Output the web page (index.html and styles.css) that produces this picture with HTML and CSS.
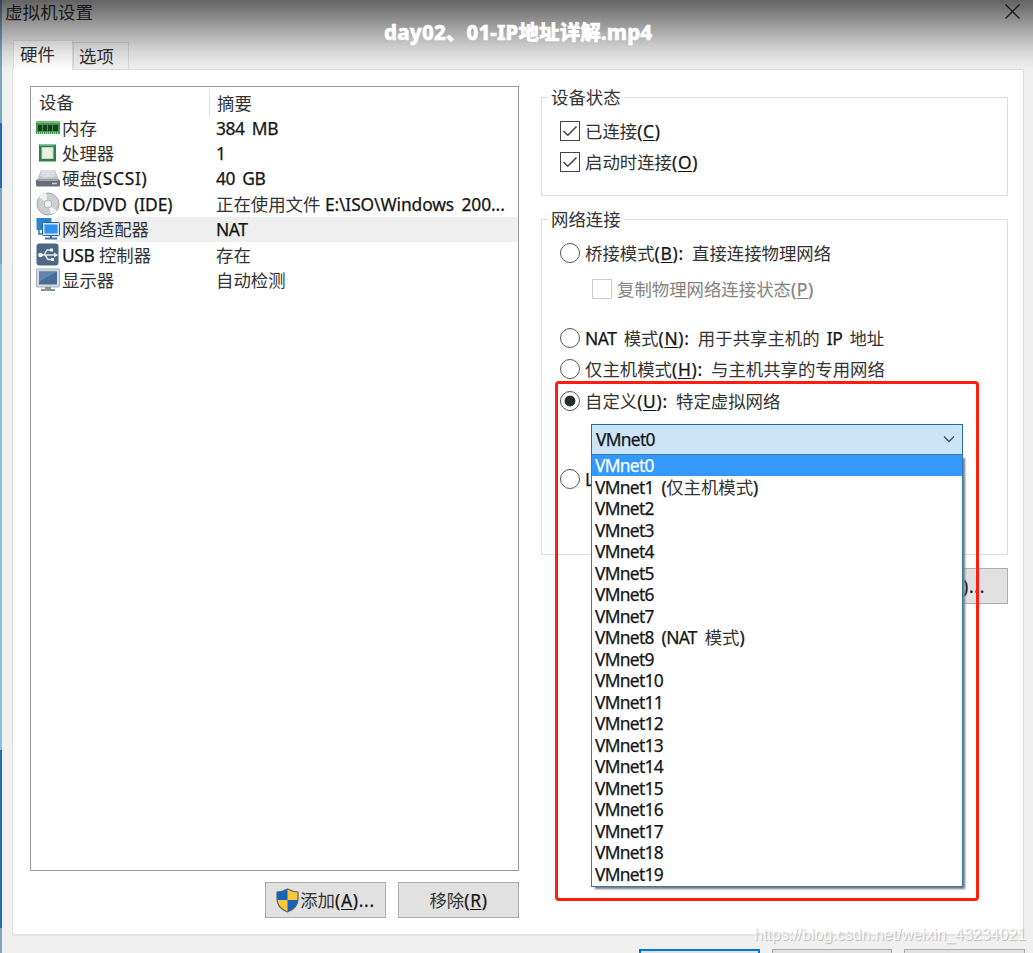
FILE: index.html
```html
<!DOCTYPE html>
<html lang="zh-CN">
<head>
<meta charset="utf-8">
<title>虚拟机设置</title>
<link rel="stylesheet" href="styles.css">
</head>
<body>
<div class="window">
  <header class="titlebar"><span>虚拟机设置</span>
    <svg class="close" width="17" height="17" viewBox="0 0 17 17"><path d="M1.5 1.5l14 14M15.5 1.5l-14 14" stroke="#333" stroke-width="1.4" fill="none"/></svg>
  </header>
  <nav class="tabs"><div class="tab active">硬件</div><div class="tab">选项</div></nav>
  <main class="panel">
    <section class="left">
      <div class="devices">
        <div class="row head"><span class="name">设备</span><span class="sum">摘要</span></div>
        <div class="row"><svg class="ico" viewBox="0 0 24 24"><path d="M0 5h24v13H0z" fill="#3c9a4a"/><path d="M0 5h24v2H0z" fill="#79bd7a"/><path d="M2 9h4v6H2zM7 9h4v6H7zM12 9h4v6h-4zM17 9h5v6h-5z" fill="#24382a"/><path d="M1 17h22" stroke="#d6c74c" stroke-width="2" stroke-dasharray="1 1"/></svg><span class="name">内存</span><span class="sum"><i>384 MB</i></span></div>
        <div class="row"><svg class="ico" viewBox="0 0 24 24"><rect x="3" y="3.500" width="17" height="17" fill="#278345"/><path d="M4 4.500h15" stroke="#62ae73" stroke-width="1"/><rect x="6" y="6.500" width="11" height="11" fill="#e8f0e8" stroke="#c1d5c1"/></svg><span class="name">处理器</span><span class="sum"><i>1</i></span></div>
        <div class="row"><svg class="ico" viewBox="0 0 24 24"><path d="M5 4h14l4 10H1z" fill="#c2c5ca"/><path d="M6 4h12l2 6q-9 3-16 0z" fill="#dcdee2"/><rect x="0" y="13.500" width="24" height="7" rx="1.500" fill="#686d77"/><path d="M2 14.500h20" stroke="#a6aab2"/><path d="M16 17.500h5" stroke="#c5d3da" stroke-width="1.500"/></svg><span class="name">硬盘<i class="key">(SCSI)</i></span><span class="sum"><i>40 GB</i></span></div>
        <div class="row"><svg class="ico" viewBox="0 0 24 24"><circle cx="12" cy="12" r="11" fill="#cdd0d3" stroke="#a3a7aa"/><path d="M12 12L3 5a11 11 0 0 1 7-4zM12 12l9 7a11 11 0 0 1-6 3z" fill="#f3f4f5"/><circle cx="12" cy="12" r="4" fill="#e9ebed" stroke="#adb1b5"/><circle cx="12" cy="12" r="1.500" fill="#fff"/></svg><span class="name"><i class="cd">CD/DVD (IDE)</i></span><span class="sum">正在使用文件 <i class="path">E:\ISO\Windows 200...</i></span></div>
        <div class="row selected"><svg class="ico" viewBox="0 0 24 24"><rect x="0.500" y="1" width="15" height="12" fill="#2b83ce"/><path d="M3 13v4h4" stroke="#3b6f9f" stroke-width="1.500" fill="none"/><rect x="6.500" y="5.500" width="17" height="13" rx="1" fill="#d0e5f5" stroke="#2765a0"/><rect x="8.500" y="7.500" width="13" height="9" fill="#2d93ee"/><path d="M15 18v3M9 21.500h12" stroke="#4779a2" stroke-width="2"/></svg><span class="name">网络适配器</span><span class="sum"><i>NAT</i></span></div>
        <div class="row"><svg class="ico" viewBox="0 0 24 24"><rect x="0.500" y="0.500" width="22" height="22" rx="3" fill="#4d6985"/><path d="M3 12h16M8 12l3-5h4M9 12l3 4.500h4" stroke="#dfeaf2" stroke-width="1.400" fill="none"/><circle cx="4.500" cy="12" r="2.300" fill="#edf4f8"/><path d="M18 9.500l4 2.500-4 2.500zM14 5.500h3v3h-3zM15 15h3v3h-3z" fill="#edf4f8"/></svg><span class="name"><i>USB</i> 控制器</span><span class="sum">存在</span></div>
        <div class="row"><svg class="ico" viewBox="0 0 24 24"><rect x="0.500" y="1" width="23" height="18" rx="1" fill="#d5dce2" stroke="#a5afb8"/><path d="M3 3.500h18v13H3z" fill="#486c98"/><path d="M3 3.500h18L3 14z" fill="#6384ab"/><path d="M9 19h6v2h4v2H5v-2h4z" fill="#8496a8"/></svg><span class="name">显示器</span><span class="sum">自动检测</span></div>
      </div>
      <div class="actions">
        <div class="button"><svg width="23" height="25" viewBox="0 0 23 25"><path d="M11.500 1Q17 4 22 4v7q0 9-10.500 13Q1 20 1 11V4q5 0 10.500-3z" fill="#1464bd"/><path d="M11.500 1Q17 4 22 4v8H11.500zM1 12h10.500v12Q2.500 20 1 12z" fill="#fdc735"/><path d="M11.500 1Q17 4 22 4v7q0 9-10.500 13Q1 20 1 11V4q5 0 10.500-3z" fill="none" stroke="#5d6268" stroke-width="1.200"/></svg><span>添加<i class="key">(<u>A</u>)...</i></span></div>
        <div class="button"><span>移除<i class="key">(<u>R</u>)</i></span></div>
      </div>
    </section>
    <section class="right">
      <div class="group status">
        <div class="legend">设备状态</div>
        <div class="opt"><svg width="20" height="20" viewBox="0 0 20 20"><rect x=".5" y=".5" width="19" height="19" fill="#fff" stroke="#444"/><path d="M3.500 10l4.300 4.200L16.500 5.500" fill="none" stroke="#444" stroke-width="1.600"/></svg><span>已连接<i class="key">(<u>C</u>)</i></span></div>
        <div class="opt"><svg width="20" height="20" viewBox="0 0 20 20"><rect x=".5" y=".5" width="19" height="19" fill="#fff" stroke="#444"/><path d="M3.500 10l4.300 4.200L16.500 5.500" fill="none" stroke="#444" stroke-width="1.600"/></svg><span>启动时连接<i class="key">(<u>O</u>)</i></span></div>
      </div>
      <div class="group network">
        <div class="legend">网络连接</div>
        <div class="opt"><b class="radio"></b><span>桥接模式<i class="key">(<u>B</u>): </i>直接连接物理网络</span></div>
        <div class="opt sub"><b class="check"></b><span>复制物理网络连接状态<i class="key">(<u>P</u>)</i></span></div>
        <div class="opt nat"><b class="radio"></b><span><i>NAT </i>模式<i class="key">(<u>N</u>): </i>用于共享主机的<i> IP </i>地址</span></div>
        <div class="opt"><b class="radio"></b><span>仅主机模式<i class="key">(<u>H</u>): </i>与主机共享的专用网络</span></div>
        <div class="opt"><b class="radio on"></b><span>自定义<i class="key">(<u>U</u>): </i>特定虚拟网络</span></div>
        <div class="combo"><i class="vm">VMnet0</i><svg width="12" height="8" viewBox="0 0 12 8"><path d="M1 1.500l5 5 5-5" fill="none" stroke="#444f58" stroke-width="1.400"/></svg>
          <div class="menu">
            <div class="item hot"><span><i>VMnet0</i></span></div>
            <div class="item"><span><i>VMnet1 (</i>仅主机模式<i>)</i></span></div>
            <div class="item"><span><i>VMnet2</i></span></div>
            <div class="item"><span><i>VMnet3</i></span></div>
            <div class="item"><span><i>VMnet4</i></span></div>
            <div class="item"><span><i>VMnet5</i></span></div>
            <div class="item"><span><i>VMnet6</i></span></div>
            <div class="item"><span><i>VMnet7</i></span></div>
            <div class="item"><span><i>VMnet8 (NAT </i>模式<i>)</i></span></div>
            <div class="item"><span><i>VMnet9</i></span></div>
            <div class="item"><span><i>VMnet10</i></span></div>
            <div class="item"><span><i>VMnet11</i></span></div>
            <div class="item"><span><i>VMnet12</i></span></div>
            <div class="item"><span><i>VMnet13</i></span></div>
            <div class="item"><span><i>VMnet14</i></span></div>
            <div class="item"><span><i>VMnet15</i></span></div>
            <div class="item"><span><i>VMnet16</i></span></div>
            <div class="item"><span><i>VMnet17</i></span></div>
            <div class="item"><span><i>VMnet18</i></span></div>
            <div class="item"><span><i>VMnet19</i></span></div>
          </div>
        </div>
        <div class="opt lan"><b class="radio"></b><span><i>L</i></span></div>
      </div>
      <div class="button advanced"><i class="key">)...</i></div>
    </section>
  </main>
  <footer class="footer"><div class="button primary"></div><div class="button"></div><div class="button"></div></footer>
</div>
<div class="desktop-edge"></div>
<div class="shade"></div>
<div class="video-title">day02、01-IP地址详解.mp4</div>
<div class="highlight"></div>
<div class="watermark">https://blog.csdn.net/weixin_43234021</div>
</body>
</html>
```
FILE: styles.css
```css
* { box-sizing: border-box; }
body { margin: 0; width: 1033px; height: 953px; overflow: hidden; position: relative; background: #f0f0f0;
  font-family: "Noto Sans", "Noto Sans CJK SC", sans-serif; font-size: 17.4px; line-height: 24px; color: #333; }
span { white-space: pre; }
i { font-style: normal; letter-spacing: -0.4px; word-spacing: 3px; color: #151515; -webkit-text-stroke: 0.25px currentColor; }
.key { letter-spacing: 0.7px; }
u { text-underline-offset: 2px; text-decoration-thickness: 1px; }
svg { flex: none; display: block; }
.window, .titlebar, .tabs, .panel, .left, .right, .devices, .row, .opt, .button, .actions, .combo, .footer, .item, .group { display: flex; }
.window { height: 953px; flex-direction: column; overflow: hidden; }
.titlebar { height: 40px; padding: 0 12px 0 5px; justify-content: space-between; font-size: 17.6px; flex: none; }
.titlebar .close { margin-top: 3px; }
.tabs { height: 29px; padding-left: 13px; align-items: flex-end; flex: none; }
.tab { width: 56px; height: 27px; border: 1px solid #d9d9d9; border-bottom: 0; padding-left: 5px; line-height: 26px; }
.tab.active { width: 60px; height: 30px; margin-bottom: -1px; background: #fff; border-color: #e3e3e3; padding-left: 6px; line-height: 27px; position: relative; z-index: 1; }
.panel { margin-left: 12px; width: 1012px; height: 867px; flex: none; background: #fff; border: 1px solid #dcdcdc; border-bottom: 2px solid #e3e3e3; padding: 16px 15px 0 17px; gap: 22px; }
.left { width: 489px; flex-direction: column; }
.devices { height: 785px; border: 1px solid #999; flex-direction: column; }
.row { height: 25.4px; align-items: center; padding-left: 5px; flex: none; }
.row.head { height: 28px; padding-left: 8px; padding-top: 3px; }
.row .name { width: 154px; }
.row.head .name { width: 171px; height: 28px; line-height: 27px; border-right: 1px solid #e2e2e2; margin-right: -1px; }
.row .sum { padding-left: 0; }
.row.head .sum { padding-left: 8px; }
.ico { width: 24px; height: 24px; margin-right: 2px; }
.selected { background: linear-gradient(90deg, #fff 24px, #efefef 24px); }
.cd { letter-spacing: -0.15px; }
.path { letter-spacing: -0.1px; }
.actions { margin: 11px 0 0 235px; gap: 12px; }
.button { width: 122px; height: 36px; border: 1px solid #adadad; background: #e1e1e1; align-items: center; justify-content: center; flex: none; }
.actions .button { width: 121px; }
.button svg { margin-right: 1px; }
.right { width: 467px; flex-direction: column; }
.group { border: 1px solid #dedede; flex-direction: column; position: relative; padding-left: 18px; flex: none; }
.legend { background: #fff; align-self: flex-start; margin: -13px 0 0 -12px; padding: 0 3px; height: 24px; }
.status { margin-top: 11px; height: 99px; }
.network { margin-top: 23px; height: 336px; }
.opt { height: 31.500px; align-items: center; flex: none; }
.opt > svg, .radio, .check { margin-right: 5px; flex: none; width: 20px; height: 20px; }
.status .legend { margin-bottom: 6px; }
.network .legend { margin-bottom: 6px; }
.radio { border: 1px solid #555; border-radius: 50%; background: #fff; }
.radio.on { background: radial-gradient(circle, #252d30 0 5px, #fff 5.800px); }
.check { border: 1px solid #ccc; }
.sub { padding-left: 32px; margin-top: 5px; color: #838383; }
.sub i { color: #838383; }
.nat { margin-top: 17px; }
.combo { position: relative; z-index: 2; margin: 7px 0 0 31px; width: 372px; height: 31px; flex: none; align-items: center; justify-content: space-between; padding: 0 7px 0 4px; background: #cce4f7; border: 1px solid #266d9e; }
.menu { position: absolute; left: -1px; top: 29px; width: 372px; height: 433px; background: #fff; border: 1px solid #347bb0; box-shadow: 3px 3px 2px -1px #777; }
.item { height: 21.500px; padding-left: 3px; align-items: center; }
.item i, .combo .vm { letter-spacing: -0.7px; }
.item i { word-spacing: 4px; }
.hot { background: #3399ff; }
.hot i { color: #fff; }
.lan { margin-top: 9px; }
.advanced { margin: 13px 0 0 auto; width: 126px; padding-right: 22px; justify-content: flex-end; }
.footer { height: 4px; margin: 13px 0 0 639px; gap: 12px; flex: none; }
.footer .button { width: 120.500px; }
.footer .primary { border: 2px solid #0078d7; }
.desktop-edge { position: absolute; left: 0; top: 0; width: 2px; height: 953px; background: linear-gradient(#79a7c8 0 123px, #2769b4 123px 188px, #7ba6c3 188px 264px, #87bcdb 264px 750px, #2869b3 750px 928px, #7fa5c8 928px); }
.shade { position: absolute; inset: 0 0 auto; height: 72px; background: linear-gradient(rgba(0,0,0,.59), rgba(0,0,0,.42) 18px, rgba(0,0,0,.27) 34px, rgba(0,0,0,.1) 52px, rgba(0,0,0,0) 70px); z-index: 4; }
.video-title { position: absolute; z-index: 5; left: 384px; top: 20px; white-space: nowrap; color: #fff; font: 800 20.5px/24px "Noto Sans", "Noto Sans CJK SC", sans-serif; letter-spacing: 0.1px; -webkit-text-stroke: 0.5px #fff; }
.highlight { position: absolute; z-index: 5; left: 555px; top: 381px; width: 424px; height: 520px; border: 3px solid #ff1d10; border-radius: 4px; }
.watermark { position: absolute; z-index: 6; left: 754px; top: 924px; color: rgba(255,255,255,.85); text-shadow: 1px 1px 1px #bbb; font: 16px/22px "Liberation Sans", sans-serif; }
```
